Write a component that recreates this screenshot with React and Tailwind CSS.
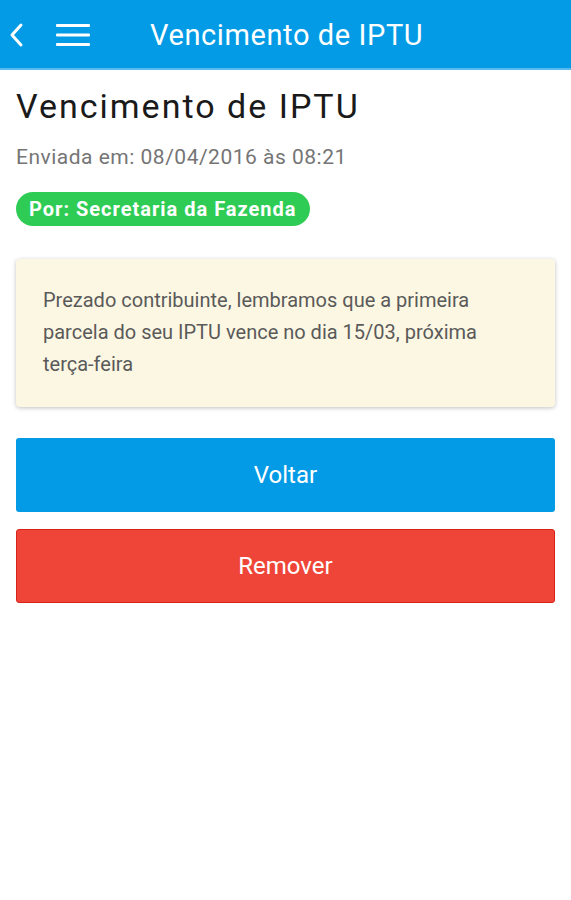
import React from 'react';

const font = { fontFamily: 'Roboto, "Noto Sans", sans-serif' };

const Header = () => (
    <div className="h-[70px] bg-[#039be5] border-b-2 border-[#5ab9ee] flex items-center text-white">
        <svg width="18" height="26" viewBox="0 0 18 26" className="ml-[7px] mt-[2px]">
            <path d="M14 3 L5 13 L14 23" fill="none" stroke="white" strokeWidth="3" strokeLinecap="round" strokeLinejoin="round" />
        </svg>
        <svg width="34" height="24" viewBox="0 0 34 24" className="ml-[31px] mt-[2px]">
            <rect x="0" y="1" width="34" height="3" rx="1" fill="white" />
            <rect x="0" y="10.5" width="34" height="3" rx="1" fill="white" />
            <rect x="0" y="20" width="34" height="3" rx="1" fill="white" />
        </svg>
        <h1 className="ml-[60px] mt-[3px] text-[29px] tracking-[0.6px] leading-none">Vencimento de IPTU</h1>
    </div>
);

const App = () => (
    <div className="w-[571px] h-[900px] bg-white" style={font}>
        <Header />
        <div className="px-4">
            <h2 className="mt-[14px] text-[34px] tracking-[2px] leading-[44px] text-[#1a1a1a]">Vencimento de IPTU</h2>
            <p className="mt-[16px] text-[21px] tracking-[0.5px] leading-[26px] text-[#757575]">Enviada em: 08/04/2016 às 08:21</p>
            <span className="mt-[22px] inline-flex h-[34px] items-center px-[13px] rounded-full bg-[#2ecc55] text-white font-bold text-[20px] tracking-[1px]">
                Por: Secretaria da Fazenda
            </span>
            <div className="mt-[33px] bg-[#fcf7e3] rounded-sm shadow-[0_1px_4px_rgba(0,0,0,0.25)] px-[27px] pt-[25px] pb-[27px]">
                <p className="text-[20px] leading-[32px] text-[#5a5a5a]">
                    Prezado contribuinte, lembramos que a primeira parcela do seu IPTU vence no dia 15/03, próxima terça-feira
                </p>
            </div>
            <button className="mt-[31px] w-full h-[74px] bg-[#039be5] rounded-[3px] text-white text-[24px]">Voltar</button>
            <button className="mt-[17px] w-full h-[74px] bg-[#ef4539] border border-[#d8231a] rounded-[3px] text-white text-[24px]">Remover</button>
        </div>
    </div>
);

export default App;
